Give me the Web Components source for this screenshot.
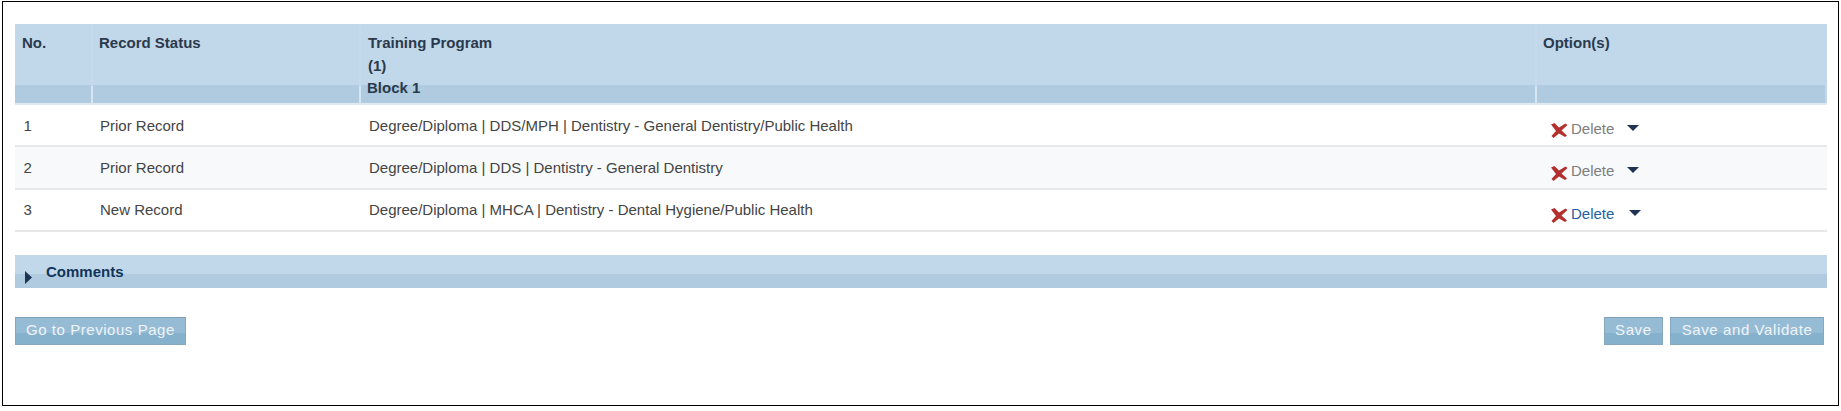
<!DOCTYPE html>
<html><head><meta charset="utf-8"><title>Training Programs</title>
<style>html,body{margin:0;padding:0;background:#fff;font-family:"Liberation Sans",Arial,sans-serif}</style>
</head><body>
<app-frame>
  <record-table>
    <record-row no="1" status="Prior Record" program="Degree/Diploma | DDS/MPH | Dentistry - General Dentistry/Public Health"></record-row>
    <record-row alt no="2" status="Prior Record" program="Degree/Diploma | DDS | Dentistry - General Dentistry"></record-row>
    <record-row active no="3" status="New Record" program="Degree/Diploma | MHCA | Dentistry - Dental Hygiene/Public Health"></record-row>
  </record-table>
  <comments-bar>Comments</comments-bar>
  <action-bar>
    <flat-button slot="left">Go to Previous Page</flat-button>
    <flat-button slot="right" wide>Save</flat-button>
    <flat-button slot="right" wide>Save and Validate</flat-button>
  </action-bar>
</app-frame>
<script>
function def(name, html){
  customElements.define(name, class extends HTMLElement{
    connectedCallback(){
      if(this.shadowRoot) return;
      const r=this.attachShadow({mode:'open'});
      r.innerHTML=typeof html==='function'?html(this):html;
    }
  });
}
const COLS='76px 268px 1176px 292px';
def('app-frame',`<style>
:host{display:block;box-sizing:border-box;width:1837px;height:405px;margin:1px 0 0 2px;border:1px solid #000;padding:22px 0 0 12px;color:#333;font:15px "Liberation Sans",Arial,sans-serif}
</style><slot></slot>`);
def('record-table',`<style>
:host{display:block;width:1812px}
.head{display:grid;grid-template-columns:${COLS};height:81px;background:#c1d7ea;border-bottom:2px solid #dfe9f2;box-sizing:border-box;color:#2a3a4c;font-weight:bold;font-size:15px}
.c{padding:8px 0 0 7px;line-height:22.5px;height:79px;box-sizing:border-box;background:linear-gradient(#c1d7ea 0 61px,#b0cbdf 61px 79px)}
.c+.c{border-left:2px solid;border-image:linear-gradient(#c5daec 0 61px,#d7e5f0 61px) 1}
.s{padding-left:6px}
.p{padding-left:7px}
.op{padding-left:6px;margin-right:2px}
.b{display:block;margin-left:-1px}
</style>
<div class="head">
<div class="c">No.</div>
<div class="c s">Record Status</div>
<div class="c p">Training Program<br>(1)<span class="b">Block 1</span></div>
<div class="c op">Option(s)</div>
</div><slot></slot>`);
def('record-row',h=>{
 const g=h.hasAttribute('active'), a=h.hasAttribute('alt');
 return `<style>
:host{display:grid;grid-template-columns:${COLS};height:${a?43:42}px;box-sizing:border-box;border-bottom:2px solid #e6e8ea;align-items:start;background:${a?'#f7f9fb':'#fff'};color:#444;font-size:15px;line-height:20px}
.t1{padding:${g?10:11}px 0 0 8.5px;white-space:nowrap}
.t2{padding:${g?10:11}px 0 0 9px;white-space:nowrap}
.t3{padding:${g?10:11}px 0 0 10px;white-space:nowrap}
.o{padding:0 0 0 15px;display:flex;align-items:flex-start}
svg.x{width:18px;height:15px;margin-top:${a?19:18}px;flex:none}
.l{color:${g?'#1f629f':'#7d7d7d'};margin:14px 0 0 3px;line-height:20px;padding:0}
svg.t{width:12px;height:6px;margin:20px 0 0 ${g?15:13}px;flex:none}
</style>
<div class="t1">${h.getAttribute('no')}</div><div class="t2">${h.getAttribute('status')}</div><div class="t3">${h.getAttribute('program')}</div>
<div class="o"><svg class="x" viewBox="0 0 18 15"><path d="M1 1.5 L4.5 0 L9 4.5 L15.5 .5 L17.5 2 L11.5 7.5 L17 12.5 L15 14 L9 10.5 L3.5 15 L1.5 13 L6 8 Z" fill="#b3302e"/></svg><span class="l">Delete</span><svg class="t" viewBox="0 0 12 6"><path d="M0 0H12L6 6Z" fill="#1f3355"/></svg></div>`;
});
def('comments-bar',`<style>
:host{display:flex;box-sizing:border-box;width:1812px;height:33px;margin-top:23px;position:relative;background:linear-gradient(#c1d7ea 0 19px,#b0cbdf 19px);color:#10345a;font-weight:bold;font-size:15px;line-height:20px;padding:7px 0 0 31px}
svg{position:absolute;left:10px;top:16px;width:7px;height:13px}
</style><svg viewBox="0 0 7 13"><path d="M0 0L7 6.5L0 13Z" fill="#1f3355"/></svg><slot></slot>`);
def('action-bar',`<style>
:host{display:flex;justify-content:space-between;width:1809px;margin-top:29px}
div{display:flex;gap:7px}
</style><div><slot name="left"></slot></div><div><slot name="right"></slot></div>`);
def('flat-button',`<style>
:host{display:block;box-sizing:border-box;height:28px;padding:0 10px;border:1px solid #87a9bf;border-top-color:#7fa1b7;background:linear-gradient(#96bcd5 0 15px,#86b1cd 15px);color:#eef4f8;font-size:15px;line-height:24px;letter-spacing:.55px;white-space:nowrap}
:host([wide]){padding:0 10.5px;letter-spacing:.6px}
</style><slot></slot>`);
</script>
</body></html>
